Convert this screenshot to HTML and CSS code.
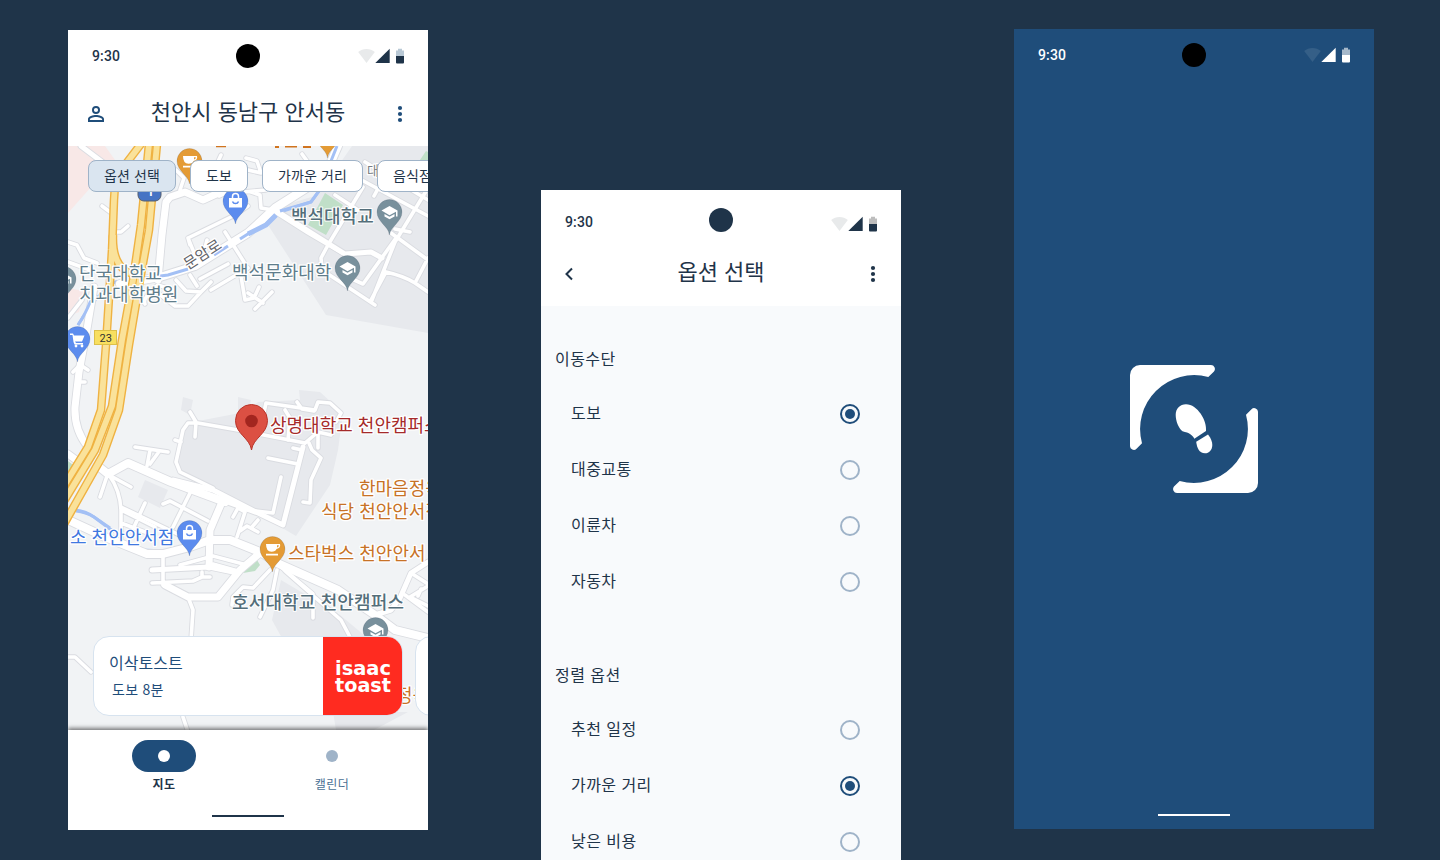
FILE: index.html
```html
<!DOCTYPE html>
<html lang="ko">
<head>
<meta charset="utf-8">
<title>천안시 동남구 안서동</title>
<link rel="stylesheet" href="styles.css">
</head>
<body>
<svg class="sprite" aria-hidden="true">
  <symbol id="status" viewBox="0 0 48 16">
    <path class="wifi" d="M.2 4.100C4.500-.1 12.500-.1 16.800 4.100L8.500 15Z"/>
    <path d="M31.700 .8V15H17.300Z"/>
    <path class="battery-top" d="M38 2.400H40V.8H44V2.400H46V8H38Z"/>
    <path d="M38 8H46V14.500Q46 15.500 45 15.500H39Q38 15.500 38 14.500Z"/>
  </symbol>
  <symbol id="more" viewBox="0 0 24 24"><circle cx="12" cy="6" r="2.1"/><circle cx="12" cy="12" r="2.1"/><circle cx="12" cy="18" r="2.1"/></symbol>
</svg>

<main class="board">
  <section class="phone phone-map">
    <div class="status">
      <span class="time">9:30</span><span class="camera"></span>
      <svg class="status-icons"><use href="#status"/></svg>
    </div>
    <header class="appbar">
      <svg class="icon" viewBox="0 0 24 24"><path fill-rule="evenodd" d="M12 4a4 4 0 1 0 0 8 4 4 0 0 0 0-8Zm0 1.900a2.100 2.100 0 1 1 0 4.200 2.100 2.100 0 0 1 0-4.200ZM12 13c-2.700 0-8 1.300-8 4v3h16v-3c0-2.700-5.300-4-8-4Zm0 1.900c3 0 6.100 1.500 6.100 2.100v1.100H5.900V17c0-.6 3.100-2.100 6.100-2.100Z"/></svg>
      <h1>천안시 동남구 안서동</h1>
      <svg class="icon"><use href="#more"/></svg>
    </header>

    <div class="map">
      <svg class="map-canvas" viewBox="68 146 360 584">
        <defs>
          <g id="streets">
            <g class="s">
              <path d="M102 206L110 212M115 232H121L128 226"/>
              <path d="M190 245L188 238L235 215L248 206M199 265L188 238M207 240L204 252M225 232L244 262"/>
              <path d="M158 293L175 306H188L201 292L211 282M176 280L186 291L201 292M190 275L197 286M211 290L248 268M200 279L228 264M241 276L245 300L254 298L259 287M255 309L272 292M248 293L263 303"/>
              <path d="M145 304Q142 298 158 285L173 290"/>
              <path d="M215 168L221 155M238 178L243 192L266 190L272 170M248 170L261 173L257 161L246 158M251 192L260 195L261 208L273 210M302 154L315 172M219 196L232 190M180 190L184 178L176 170"/>
              <path d="M275 212L308 233L342 253M328 245L363 187M328 245L321 258L322 270L375 305M335 195L358 210M358 178L428 216M371 300L386 272Q404 276 415 283L428 292M372 300L395 242L428 188M352 279L363 284L396 238M391 233L428 260M415 283L428 258M395 229L410 232M365 162L428 200M374 196L388 170"/>
              <path d="M68 242L77 245L84 258L97 263M68 262L90 270M68 318L82 300M73 372L82 363M88 370L82 366M85 382H79"/>
              <path d="M135 447L168 452M150 450L147 466M158 453L150 464M108 473L100 497M109 475L131 487M109 475Q120 490 121 510V545M121 510L155 527M121 523L145 532M145 503L134 527"/>
              <path d="M163 504L170 501L208 521M190 493L173 527M121 507L190 540M245 512L237 537M240 531L247 526L258 532M252 527L258 520M233 517L238 508L245 512"/>
              <path d="M190 412L196 422L195 437M175 440L181 442M183 430L188 423H198L238 430L305 443M183 430L176 462L180 472L213 488"/>
              <path d="M263 417L266 403L315 410L318 402L330 403L341 413L336 422L326 420M297 402L302 409L314 411M285 410L290 418L288 440M305 443L318 432L331 435M318 432V448M293 448L302 450M268 458L298 464M281 477L273 513L248 510M309 443L312 450L321 458L311 480L310 503L303 502"/>
              <path d="M180 565L213 556L247 565M213 564L238 571M152 583L193 581L202 577H210M163 557V585M202 572V577M270 570L253 588L243 587L233 597L232 605M277 570L273 590L260 617M281 567L313 594V618M285 571L341 620L350 637M188 597L193 610L191 640M183 717L188 732M68 657H75L91 672"/>
              <path d="M411 573L428 584M428 586L410 597L428 606M405 595L428 612M421 589L418 596"/>
            </g>
            <g class="m">
              <path d="M81 146L110 168M152 570L209 567L233 572M222 500L258 513L283 525L303 447M173 480L213 490L258 513M428 562L411 573L400 598L391 610L378 614M275 210L345 254L371 252L382 258"/>
            </g>
            <g class="l">
              <path d="M158 280L162 235L166 202L170 197L185 192L203 200L225 190M94 287L86 335M84 345L79 372L75 407Q74 430 88 447M222 502L210 530L209 567M165 585L188 597H218L240 570L260 553M68 454L83 465"/>
            </g>
            <g class="x">
              <path d="M120 284L160 277L195 266L248 233L275 208L316 182L331 162L338 146"/>
              <path d="M98 466L108 474L128 463L171 482L225 502M66 519L105 537L147 554H163L190 547L210 540H230L260 552L277 563L338 590L375 615L395 630L428 638"/>
            </g>
          </g>
          <g id="highway">
            <path d="M141 144L125 165Q114 180 114 200L112 250L106 345L101 410L88 447L64 486"/>
            <path d="M113 235Q112 262 126 271L136 276"/>
            <path d="M149 144L141 225L133 280L122 340L112 406L95 450L64 501"/>
            <path d="M157 144L149 230L140 280L129 345L119 410L103 455L64 524"/>
          </g>
          <path id="pin" d="M0 23C-1 14-12.500 10-12.500 0A12.500 12.500 0 1 1 12.500 0C12.500 10 1 14 0 23Z"/>
          <g id="school"><use href="#pin"/><path class="glyph" d="M-8-1.500L0-6L8-1.500V4.500H6.500V-.3L0 3.300ZM-5 2.100L0 4.800L5 2.100V4.500L0 7.300L-5 4.500Z"/></g>
          <g id="shop"><use href="#pin"/><path class="glyph" d="M-6.500-3H6.500V6.500H-6.500Z"/><path class="handle" d="M-3-3V-4.500A3 3 0 0 1 3-4.500V-3"/><path class="smile" d="M-3 .5A3.200 3.200 0 0 0 3 .5"/></g>
          <g id="cafe"><use href="#pin"/><path class="glyph" fill-rule="evenodd" d="M-6.500-5H7.500Q8.500-1 4 0Q3 2.800-1 2.800Q-6.500 2.500-6.500-5ZM4.500-3.700V-1.400Q6.500-1.800 6.300-3.700ZM-6.500 4.700H5.500V6.400H-6.500Z"/></g>
        </defs>

        <path class="hospital" d="M68 146H105L115 160L68 213ZM68 288L84 291L79 312L68 316Z"/>
        <path class="campus" d="M268 225L326 315L428 333V146H352L318 195L275 208ZM188 423L245 412L258 402L300 400L299 390L320 392L343 413L338 450L330 485L296 536L248 508L180 475L175 465L181 435ZM183 397L193 400L190 415L181 410ZM238 397L251 400L248 414L238 411ZM145 480L168 490L160 508L138 497ZM281 580L272 620L283 640H370L340 615ZM333 712L336 730H374L408 712Z"/>
        <path class="park" d="M325 193L343 205L326 235L308 225ZM418 163L426 151L428 152V168ZM68 461L77 468L68 480ZM243 573L257 560L260 565L255 571Z"/>
        <path class="river wide" d="M246 234L268 222L277 213"/>
        <path class="river" d="M248 232L228 246L201 264L168 275L145 278L115 282Q98 292 78 325M277 213L311 202L319 191L337 146M74 510Q86 511 94 517L114 532M140 550L168 551"/>
        <use class="casing" href="#streets"/>
        <use class="surface" href="#streets"/>
        <path class="river" d="M251 232L240 239M228 246L214 255M188 269L168 275L145 278M280 211L311 202L319 191L337 146M76 511Q86 512 94 517L110 528M91 300Q85 315 78 325"/>
        <path class="river wide" d="M248 234L266 225L276 215"/>
        <use class="hw-edge" href="#highway"/>
        <use class="hw-fill" href="#highway"/>

        <rect class="shield-blue" x="138" y="180" width="23" height="21" rx="6"/>
        <text class="shield-no" x="147" y="196">1</text>
        <rect class="shield-yellow" x="94.500" y="330.500" width="22" height="14"/>
        <text class="route" x="99.500" y="341.500">23</text>

        <g class="orange">
          <path class="sliver" d="M216 146H226V147.300H216ZM275 146H279V148H275ZM285 146H297V147.500H285ZM303 146H311V148H303Z"/>
          <use href="#cafe" x="189.500" y="161"/><use href="#pin" x="327.500" y="135"/><use href="#cafe" x="272.500" y="549"/>
        </g>
        <g class="slate"><use href="#school" x="389.500" y="212"/><use href="#school" x="347.500" y="268"/><use href="#school" x="375.500" y="630"/><use href="#school" x="63.500" y="279"/></g>
        <g class="blue"><use href="#shop" x="235.500" y="201"/><use href="#shop" x="189.500" y="533"/><use href="#pin" x="77.500" y="339"/></g>
        <path class="glyph" d="M70 333.500H73L74 335.500H84.500L82 341.500H75L76 343H83V344.500H74.500L73.500 342L72.500 335H70Z"/><circle class="glyph" cx="76" cy="346" r="1.400"/><circle class="glyph" cx="82" cy="346" r="1.400"/>
        <path class="marker" d="M251.500 450C250 438 235.500 434 235.500 420.500A16 16 0 0 1 267.500 420.500C267.500 434 253 438 251.500 450Z"/>
        <circle class="marker-dot" cx="251.500" cy="421" r="6.300"/>

        <g class="label">
          <text class="t-road" transform="translate(188 270) rotate(-33)">문암로</text>
          <text class="t-small" x="367" y="175">대</text>
          <text class="t-slate strong" x="291" y="223">백석대학교</text>
          <text class="t-slate" x="232" y="279">백석문화대학</text>
          <text class="t-slate" x="79" y="280">단국대학교</text>
          <text class="t-slate" x="79" y="301">치과대학병원</text>
          <text class="t-red" x="270" y="432">상명대학교 천안캠퍼스</text>
          <text class="t-orange" x="359" y="495">한마음정육</text>
          <text class="t-orange" x="321" y="518">식당 천안안서점</text>
          <text class="t-blue" x="70" y="544">소 천안안서점</text>
          <text class="t-orange" x="288" y="560">스타벅스 천안안서</text>
          <text class="t-slate strong" x="232" y="609" textLength="172">호서대학교 천안캠퍼스</text>
          <text class="t-orange" x="396" y="702">정육</text>
        </g>
      </svg>

      <div class="overlay">
        <div class="chips">
          <span class="chip chip-on chip-a">옵션 선택</span><span class="chip chip-b">도보</span><span class="chip chip-c">가까운 거리</span><span class="chip chip-d">음식점</span>
        </div>
        <div class="cards">
          <article class="card">
            <div class="card-text"><h2>이삭토스트</h2><p>도보 8분</p></div>
            <svg class="brand" viewBox="0 0 79 78"><text x="12" y="38" textLength="56" lengthAdjust="spacingAndGlyphs">isaac</text><text x="12" y="55" textLength="56" lengthAdjust="spacingAndGlyphs">toast</text></svg>
          </article>
          <article class="card"></article>
        </div>
      </div>
    </div>

    <nav class="tabs">
      <div class="tab tab-on"><span class="pill"><i></i></span><b>지도</b></div>
      <div class="tab"><span class="pill"><i></i></span><b>캘린더</b></div>
      <span class="handle-bar"></span>
    </nav>
  </section>

  <section class="phone phone-options">
    <div class="status">
      <span class="time">9:30</span><span class="camera"></span>
      <svg class="status-icons"><use href="#status"/></svg>
    </div>
    <header class="appbar">
      <svg class="icon" viewBox="0 0 24 24"><path class="chevron" d="M15 6.500L9.500 12L15 17.500"/></svg>
      <h1>옵션 선택</h1>
      <svg class="icon"><use href="#more"/></svg>
    </header>
    <div class="options">
      <h2 class="first">이동수단</h2>
      <div class="row"><span class="name">도보</span><span class="radio checked"></span></div>
      <div class="row"><span class="name">대중교통</span><span class="radio"></span></div>
      <div class="row"><span class="name">이륜차</span><span class="radio"></span></div>
      <div class="row"><span class="name">자동차</span><span class="radio"></span></div>
      <h2>정렬 옵션</h2>
      <div class="row"><span class="name">추천 일정</span><span class="radio"></span></div>
      <div class="row"><span class="name">가까운 거리</span><span class="radio checked"></span></div>
      <div class="row"><span class="name">낮은 비용</span><span class="radio"></span></div>
    </div>
  </section>

  <section class="phone phone-splash">
    <div class="status">
      <span class="time">9:30</span><span class="camera"></span>
      <svg class="status-icons"><use href="#status"/></svg>
    </div>
    <div class="splash">
      <svg class="logo" viewBox="0 0 128 128">
        <path id="corner" d="M10 0H81A4 4 0 0 1 84 6.500L78.300 12A54 54 0 0 0 12 78.300L6.500 83.800A3.800 3.800 0 0 1 0 81V10A10 10 0 0 1 10 0Z"/>
        <use href="#corner" transform="rotate(180 64 64)"/>
        <path d="M45.700 50C45.700 43.500 50 39.300 56 39.300C67.500 39.300 77.300 56 76 66L64.300 73.700C62.500 70 59.500 68 52.500 66.300C48.500 63 45.700 56 45.700 50Z"/>
        <path d="M66.200 76.800L78 69.500C81 73 82.300 77 82.300 80C82.300 85 79 88.300 75 88.300C69 88.300 67 83 66.200 76.800Z"/>
      </svg>
    </div>
    <span class="handle-bar"></span>
  </section>
</main>
</body>
</html>
```

FILE: styles.css
```css
* { box-sizing: border-box; }
body {
  margin: 0;
  height: 860px;
  overflow: hidden;
  background: #1f3449;
  color: #1f3449;
  font-family: "Noto Sans CJK KR", "Noto Sans", sans-serif;
}
h1, h2, p { margin: 0; font-weight: 400; }
.sprite { display: none; }
.board { display: flex; align-items: flex-start; gap: 113px; padding-left: 68px; height: 860px; overflow: hidden; }
.phone { --wifi: #e8eaeb; --battery: #b9c9d6; display: flex; flex-direction: column; flex: none; width: 360px; height: 800px; background: #fff; overflow: hidden; }
.phone-map { margin-top: 30px; }
.phone-options { --battery: #bdbdbd; margin-top: 190px; }
.phone-splash { --wifi: #355f87; --battery: #a5b8ca; margin-top: 29px; background: #1f4d7a; color: #fff; }

/* status bar */
.status { display: grid; grid-template-columns: 1fr 24px 1fr; align-items: center; flex: none; height: 52px; padding: 0 22px 0 24px; font: 500 14px/20px Roboto, sans-serif; letter-spacing: .14px; }
.camera { width: 24px; height: 24px; margin-left: -1px; border-radius: 50%; background: #000; }
.status-icons { justify-self: end; width: 48px; height: 16px; fill: currentColor; }
.wifi { fill: var(--wifi); }
.battery-top { fill: var(--battery); }
.phone-options .status { padding-top: 8px; }
.phone-options .time { padding-top: 3px; }
.phone-options .camera { background: #1f3449; }
.phone-options .status-icons { margin-top: 7px; }

/* app bar */
.appbar { display: flex; align-items: center; justify-content: space-between; flex: none; height: 64px; padding: 0 16px; }
.appbar h1 { font-size: 22px; line-height: 28px; margin-bottom: 8px; }
.icon { width: 24px; height: 24px; fill: #1f4d7a; }
.phone-options .icon { fill: #1f3449; }
.chevron { fill: none; stroke: #1f3449; stroke-width: 2; }

/* map */
.map { position: relative; flex: none; height: 584px; overflow: hidden; background: #f1f3f5; }
.map-canvas { display: block; width: 360px; height: 584px; }
.hospital { fill: #f8e8e7; }
.campus { fill: #e7e9ed; }
.park { fill: #c0dfc8; }
.river { fill: none; stroke: #a3c0f5; stroke-width: 3px; }
.wide { stroke-width: 5px; }
#streets { fill: none; stroke-linecap: round; stroke-linejoin: round; }
.casing { --edge: 1.800px; stroke: #dadce1; }
.surface { --edge: 0px; stroke: #fff; }
.s { stroke-width: calc(3.600px + var(--edge)); }
.m { stroke-width: calc(5px + var(--edge)); }
.l { stroke-width: calc(7px + var(--edge)); }
.x { stroke-width: calc(8px + var(--edge)); }
.hw-edge, .hw-fill { fill: none; stroke-linejoin: round; }
.hw-edge { stroke: #efb242; stroke-width: 8.600px; }
.hw-fill { stroke: #fae29a; stroke-width: 5.800px; }
.shield-blue { fill: #4674c4; stroke: #555f70; }
.shield-no { font: 700 12px Roboto, sans-serif; fill: #fff; }
.shield-yellow { fill: #f8df5f; stroke: #dcc04a; }
.route { font: 400 11px Roboto, sans-serif; fill: #333; }
.orange { fill: #e49b35; }
.sliver { fill: #d0741f; }
.slate { fill: #78909c; }
.blue { fill: #5c8cee; }
.orange use, .slate use, .blue use { stroke: rgba(50, 60, 80, .25); stroke-width: .6px; }
.glyph { fill: #fff; stroke: none; }
.handle { fill: none; stroke: #fff; stroke-width: 1.500px; }
.smile { fill: none; stroke: #5c8cee; stroke-width: 1.500px; }
.marker { fill: #dc5043; stroke: #b93328; }
.marker-dot { fill: #a3261f; }
.label text { font-size: 18px; paint-order: stroke; stroke: #fff; stroke-width: 2.500px; stroke-linejoin: round; }
.label .t-road { font-size: 15px; fill: #5f6368; }
.label .t-small { font-size: 13px; fill: #777c82; }
.t-slate { fill: #607d8b; }
.strong { fill: #546e7a; font-weight: 500; }
.label .strong { stroke-width: 2px; }
.t-red { fill: #a52a2a; }
.t-orange { fill: #c77226; }
.t-blue { fill: #3f78e0; }

.overlay { position: absolute; inset: 0; display: flex; flex-direction: column; justify-content: space-between; padding: 14px 0 14px; }
.chips { display: flex; gap: 14px; padding-left: 20px; }
.chip { display: flex; align-items: center; flex: none; height: 32px; padding: 0 0 2px 15px; border: 1px solid #9fb3c8; border-radius: 8px; background: #fff; font-size: 14px; letter-spacing: .1px; }
.chip-on { background: #dae5f0; }
.chip-a { width: 88px; }
.chip-b { width: 58px; }
.chip-c { width: 101px; }
.chip-d { width: 72px; }
.cards { display: flex; gap: 12px; padding-left: 25px; }
.card { display: flex; justify-content: space-between; flex: none; width: 310px; height: 80px; border: 1px solid #d7e3ef; border-radius: 16px; background: #fff; overflow: hidden; color: #1f4d7a; }
.card-text { display: flex; flex-direction: column; gap: 5px; padding: 13px 0 0 15px; }
.card h2 { font-size: 16px; line-height: 24px; }
.card p { padding-left: 3px; font-size: 14px; line-height: 20px; letter-spacing: .25px; }
.brand { flex: none; width: 79px; height: 78px; background: #ff2b20; }
.brand text { font: 700 20px "DejaVu Sans", sans-serif; fill: #fff; }

/* bottom navigation */
.tabs { position: relative; display: grid; grid-template-columns: 1fr 1fr; flex: none; height: 100px; padding: 10px 12px 0; background: #fff; box-shadow: 0 -2px 4px rgba(0, 0, 0, .5); }
.tab { display: flex; flex-direction: column; align-items: center; gap: 4px; font-size: 12px; line-height: 16px; color: #4a6f94; }
.tab b { font-weight: 400; letter-spacing: .4px; }
.tab-on { color: #1f3449; }
.tab-on b { font-weight: 700; }
.pill { display: grid; place-items: center; width: 64px; height: 32px; border-radius: 16px; }
.pill i { width: 12px; height: 12px; border-radius: 50%; background: #9fb3c8; }
.tab-on .pill { background: #1f4d7a; }
.tab-on .pill i { background: #fff; }
.handle-bar { grid-column: 1 / -1; justify-self: center; align-self: end; width: 72px; height: 2px; margin-bottom: 13px; background: #1f3449; }

/* options */
.options { flex: 1; padding-top: 26px; background: #f8fafc; font-size: 16px; letter-spacing: .45px; }
.options h2 { height: 92px; padding: 38px 0 0 14px; font-size: 16px; line-height: 52px; }
.options .first { height: 54px; padding-top: 0; }
.row { display: flex; align-items: center; justify-content: space-between; height: 56px; padding: 0 41px 0 30px; line-height: 24px; }
.name { padding-bottom: 4px; }
.radio { display: grid; place-items: center; width: 20px; height: 20px; border: 2px solid #9fb3c8; border-radius: 50%; }
.checked { border-color: #1f4d7a; }
.checked::after { content: ""; width: 10px; height: 10px; border-radius: 50%; background: #1f4d7a; }

/* splash */
.splash { display: grid; place-items: start center; flex: 1; padding-top: 284px; }
.logo { width: 128px; height: 128px; fill: #fff; }
.phone-splash .handle-bar { background: #fff; align-self: center; }
```
